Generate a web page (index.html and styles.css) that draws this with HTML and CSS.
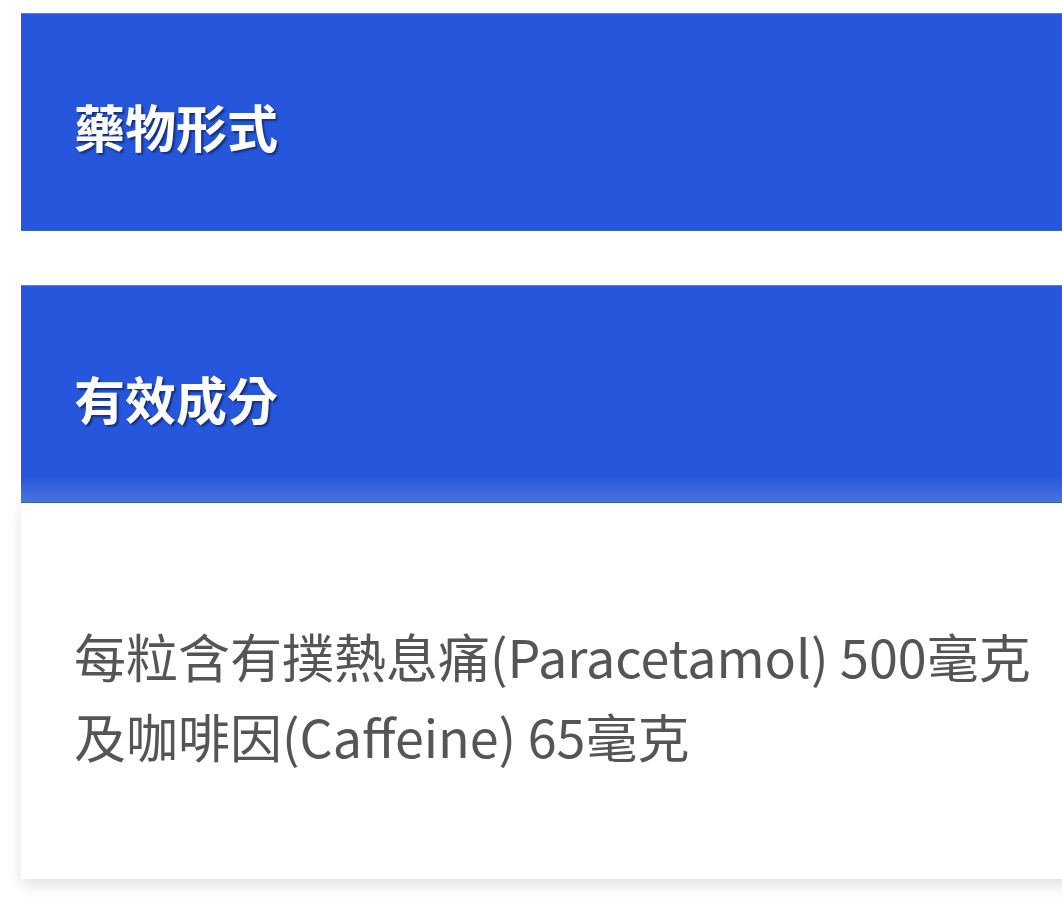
FILE: index.html
```html
<!DOCTYPE html>
<html lang="zh-Hant">
<head>
  <meta charset="UTF-8">
  <meta name="viewport" content="width=device-width, initial-scale=1.0">
  <title>藥物資料</title>
  <link rel="stylesheet" href="styles.css">
</head>
<body>

<div class="page">
  <div class="section">
    <h2 class="section-title">藥物形式</h2>
  </div>

  <div class="section">
    <h2 class="section-title">有效成分</h2>
    <div class="section-body">
      <p>每粒含有撲熱息痛(Paracetamol) 500毫克<br>及咖啡因(Caffeine) 65毫克</p>
    </div>
  </div>
</div>

</body>
</html>
```

FILE: styles.css
```css
body {
  margin: 0;
  background-color: #fff;
  font-family: "Noto Sans CJK TC", "Noto Sans", sans-serif;
  overflow: hidden;
}
.page {
  padding: 13px 0 0 21px;
  margin-right: -30px;
}
.section {
  margin-bottom: 54px;
}
.section-title {
  display: flex;
  align-items: center;
  height: 218px;
  margin: 0;
  padding: 8px 0 0 53px;
  background: linear-gradient(to bottom, #2656dc 0, #2656dc 88%, #4a74de 100%);
  border-top: 1px solid #5b7fd6;
  border-bottom: 1px solid #3a5fb8;
  color: #fff;
  font-size: 51px;
  font-weight: 700;
  text-shadow: 2px 2px 2px rgba(0, 0, 0, 0.45);
  box-sizing: border-box;
}
.section:first-child .section-title {
  background: #2656dc;
}
.section-body {
  padding: 113px 53px 103px;
  background-color: #fff;
  box-shadow: 0 6px 14px rgba(0, 0, 0, 0.12);
}
.section-body p {
  margin: 0;
  font-size: 52px;
  line-height: 80px;
  color: #555;
}
```
